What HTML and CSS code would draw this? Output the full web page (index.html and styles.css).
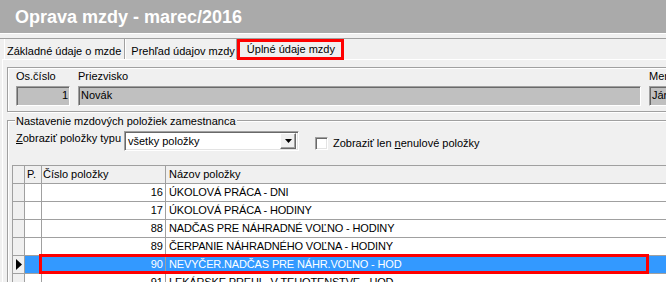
FILE: index.html
```html
<!DOCTYPE html>
<html lang="sk">
<head>
    <meta charset="UTF-8">
    <meta name="viewport" content="width=device-width, initial-scale=1.0">
    <title>Oprava mzdy</title>
    <link rel="stylesheet" href="styles.css">
</head>
<body>
    <div class="window">
        <div class="title">Oprava mzdy - marec/2016</div>
        <div class="band"></div>

        <div class="tabs">
            <div class="tab tab-first">Základné údaje o mzde</div>
            <div class="tab tab-second">Prehľad údajov mzdy</div>
            <div class="tab tab-active">Úplné údaje mzdy</div>
        </div>

        <div class="page">
            <div class="panel">
                <div class="col col-num">
                    <label>Os.číslo</label>
                    <div class="field right">1</div>
                </div>
                <div class="col col-name">
                    <label>Priezvisko</label>
                    <div class="field">Novák</div>
                </div>
                <div class="col col-first">
                    <label>Meno</label>
                    <div class="field">Ján</div>
                </div>
            </div>

            <fieldset class="group">
                <legend>Nastavenie mzdových položiek zamestnanca</legend>

                <div class="filter-row">
                    <label class="filter-label"><u>Z</u>obraziť položky typu</label>
                    <div class="combo">
                        <span>všetky položky</span>
                        <span class="combo-btn">
                            <svg width="7" height="4" viewBox="0 0 7 4"><path d="M0 0h7L3.5 4z" fill="#000"/></svg>
                        </span>
                    </div>
                    <label class="check"><span class="box"></span><span>Zobraziť len <u>n</u>enulové položky</span></label>
                </div>

                <div class="grid">
                    <div class="row head">
                        <div class="cell ind"></div>
                        <div class="cell p">P.</div>
                        <div class="cell num-h">Číslo položky</div>
                        <div class="cell name">Názov položky</div>
                    </div>
                    <div class="row">
                        <div class="cell ind"></div>
                        <div class="cell p"></div>
                        <div class="cell num">16</div>
                        <div class="cell name">ÚKOLOVÁ PRÁCA - DNI</div>
                    </div>
                    <div class="row">
                        <div class="cell ind"></div>
                        <div class="cell p"></div>
                        <div class="cell num">17</div>
                        <div class="cell name">ÚKOLOVÁ PRÁCA - HODINY</div>
                    </div>
                    <div class="row">
                        <div class="cell ind"></div>
                        <div class="cell p"></div>
                        <div class="cell num">88</div>
                        <div class="cell name">NADČAS PRE NÁHRADNÉ VOĽNO - HODINY</div>
                    </div>
                    <div class="row">
                        <div class="cell ind"></div>
                        <div class="cell p"></div>
                        <div class="cell num">89</div>
                        <div class="cell name">ČERPANIE NÁHRADNÉHO VOĽNA - HODINY</div>
                    </div>
                    <div class="row selected">
                        <div class="cell ind">
                            <svg width="6" height="11" viewBox="0 0 6 11"><path d="M0 0l6 5.5L0 11z" fill="#000"/></svg>
                        </div>
                        <div class="cell p"></div>
                        <div class="cell num">90</div>
                        <div class="cell name">NEVYČER.NADČAS PRE NÁHR.VOĽNO - HOD</div>
                        <div class="mark"></div>
                    </div>
                    <div class="row">
                        <div class="cell ind"></div>
                        <div class="cell p"></div>
                        <div class="cell num">91</div>
                        <div class="cell name">LEKÁRSKE PREHL. V TEHOTENSTVE - HOD</div>
                    </div>
                </div>
            </fieldset>
        </div>
    </div>
</body>
</html>
```

FILE: styles.css
```css
body {
    margin: 0;
    background-color: #f0f0f0;
    font-family: "Liberation Sans", Arial, sans-serif;
    font-size: 11px;
    color: #000;
    overflow: hidden;
}

.window {
    width: 760px;
}

.title {
    height: 33px;
    padding-left: 15px;
    background-color: #aaaaaa;
    color: #fff;
    font-weight: bold;
    font-size: 18px;
    line-height: 35px;
    white-space: nowrap;
}

.band {
    height: 4px;
    border-top: 1px solid #fff;
}

/* tabs */
.tabs {
    display: flex;
    align-items: flex-start;
    height: 20px;
    padding-left: 4px;
    border-top: 1px solid #a0a0a0;
}

.tab {
    box-sizing: border-box;
    height: 20px;
    padding-top: 3px;
    line-height: 18px;
    border-left: 1px solid #fff;
    border-right: 1px solid #a0a0a0;
    white-space: nowrap;
}

.tab-first {
    padding-left: 2px;
    padding-right: 3px;
}

.tab-second {
    padding-left: 5px;
    padding-right: 1px;
}

.tab-active {
    position: relative;
    height: 21px;
    padding: 0 6px 0 7px;
    line-height: 15px;
    border: 3px solid #ff0000;
}

/* tab page */
.page {
    margin-left: 2px;
    padding-top: 7px;
    border-top: 1px solid #fff;
    border-left: 1px solid #fff;
}

.panel {
    display: flex;
    gap: 8px;
    margin-left: 4px;
    padding: 2px 8px 5px;
    border: 1px solid #a0a0a0;
    box-shadow: inset 1px 1px 0 #fff, 1px 1px 0 #fff;
}

.col label {
    display: block;
    height: 13px;
    line-height: 13px;
    margin-bottom: 3px;
}

.col-num {
    width: 54px;
}

.col-name {
    width: 563px;
}

.col-first {
    width: 100px;
}

.field {
    box-sizing: border-box;
    height: 20px;
    padding: 0 1px 0 2px;
    line-height: 16px;
    background-color: #c0c0c0;
    border: 1px solid;
    border-color: #a0a0a0 #fff #fff #a0a0a0;
    box-shadow: inset 1px 1px 0 #696969;
    white-space: nowrap;
}

.right {
    text-align: right;
}

/* group box */
.group {
    min-width: 0;
    margin: 1px 0 0 4px;
    padding: 4px 0 0 4px;
    border: 1px solid #a0a0a0;
    box-shadow: inset 1px 1px 0 #fff;
}

.group legend {
    margin-left: 3px;
    padding: 3px 1px 0;
    line-height: 11px;
    background-color: #f0f0f0;
}

.filter-row {
    display: flex;
    align-items: flex-start;
    height: 20px;
    margin-left: 4px;
}

.filter-label {
    width: 108px;
    margin-top: 1px;
    line-height: 13px;
}

.combo {
    box-sizing: border-box;
    display: flex;
    align-items: center;
    width: 175px;
    height: 20px;
    padding: 0 2px 0 3px;
    background-color: #fff;
    border: 1px solid;
    border-color: #a0a0a0 #fff #fff #a0a0a0;
    box-shadow: inset 1px 1px 0 #696969, inset -1px -1px 0 #e3e3e3;
    line-height: 13px;
}

.combo-btn {
    box-sizing: border-box;
    display: flex;
    align-items: center;
    justify-content: center;
    width: 16px;
    height: 16px;
    margin-left: auto;
    background-color: #f0f0f0;
    border: 1px solid;
    border-color: #fff #696969 #696969 #fff;
    box-shadow: inset -1px -1px 0 #a0a0a0;
}

.check {
    display: flex;
    align-items: flex-start;
    margin: 6px 0 0 16px;
    line-height: 13px;
    white-space: nowrap;
}

.box {
    box-sizing: border-box;
    width: 13px;
    height: 13px;
    margin-right: 5px;
    background-color: #fff;
    border: 1px solid;
    border-color: #a0a0a0 #fff #fff #a0a0a0;
    box-shadow: inset 1px 1px 0 #696969, inset -1px -1px 0 #e3e3e3;
}

/* data grid */
.grid {
    margin-top: 14px;
    border-top: 1px solid #a0a0a0;
    border-left: 1px solid #a0a0a0;
}

.row {
    position: relative;
    display: grid;
    grid-template-columns: 12px 17px 124px 1fr;
    height: 18px;
    box-sizing: border-box;
    border-bottom: 1px solid #a0a0a0;
    line-height: 17px;
    background-color: #fff;
}

.cell {
    box-sizing: border-box;
    border-right: 1px solid #a0a0a0;
    white-space: nowrap;
    overflow: hidden;
}

.head {
    background-color: #f0f0f0;
}

.ind {
    display: flex;
    align-items: center;
    justify-content: center;
    background-color: #f0f0f0;
}

.p {
    padding-left: 2px;
}

.num-h {
    padding-left: 1px;
}

.num {
    padding-right: 2px;
    text-align: right;
}

.name {
    padding-left: 3px;
}

.row .name {
    letter-spacing: -0.15px;
}

.head .name {
    letter-spacing: 0;
}

.selected .p,
.selected .num,
.selected .name {
    background-color: #3399ff;
    color: #fff;
}

.mark {
    position: absolute;
    left: 26px;
    top: -2px;
    width: 610px;
    height: 20px;
    box-sizing: border-box;
    border: 3px solid #ff0000;
}
```
